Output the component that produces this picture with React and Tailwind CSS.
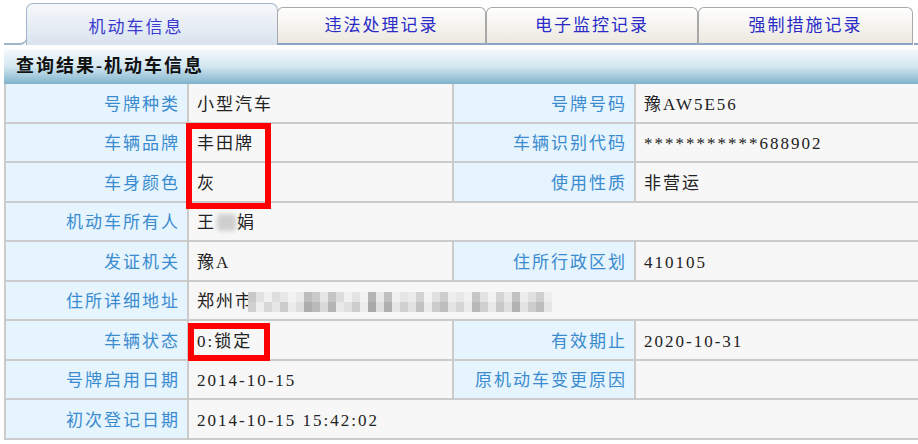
import React from "react"

const font = { fontFamily: '"Liberation Serif", "Noto Sans CJK SC", serif' }

const rows = [
  { l1: "号牌种类", v1: "小型汽车", l2: "号牌号码", v2: "豫AW5E56" },
  { l1: "车辆品牌", v1: "丰田牌", l2: "车辆识别代码", v2: "***********688902" },
  { l1: "车身颜色", v1: "灰", l2: "使用性质", v2: "非营运" },
  { l1: "机动车所有人", span: "owner" },
  { l1: "发证机关", v1: "豫A", l2: "住所行政区划", v2: "410105" },
  { l1: "住所详细地址", span: "address" },
  { l1: "车辆状态", v1: "0:锁定", l2: "有效期止", v2: "2020-10-31" },
  { l1: "号牌启用日期", v1: "2014-10-15", l2: "原机动车变更原因", v2: "" },
  { l1: "初次登记日期", span: "2014-10-15 15:42:02" },
]

// pixel mosaic over the address
const mosaicTop = [
  "bg-[#c8c8c8]", "bg-[#e2e2e2]", "bg-[#f0f0f0]", "bg-[#dedede]", "bg-[#e8e8e8]",
  "bg-[#f2f2f2]", "bg-[#eaeaea]", "bg-[#bdbdbd]", "bg-[#cbcbcb]", "bg-[#e6e6e6]",
  "bg-[#c4c4c4]", "bg-[#dcdcdc]", "bg-[#f1f1f1]", "bg-[#e4e4e4]", "bg-[#f3f3f3]",
  "bg-[#b5b5b5]", "bg-[#e9e9e9]", "bg-[#bfbfbf]", "bg-[#f0f0f0]", "bg-[#e5e5e5]",
  "bg-[#ebebeb]", "bg-[#d2d2d2]", "bg-[#f2f2f2]", "bg-[#e1e1e1]", "bg-[#cdcdcd]",
  "bg-[#eeeeee]", "bg-[#e7e7e7]", "bg-[#f1f1f1]", "bg-[#c6c6c6]", "bg-[#e3e3e3]",
  "bg-[#f2f2f2]", "bg-[#d4d4d4]", "bg-[#e9e9e9]", "bg-[#c2c2c2]", "bg-[#ededed]",
  "bg-[#e0e0e0]", "bg-[#cfcfcf]", "bg-[#eeeeee]",
]
const mosaicBottom = [
  "bg-[#d0d0d0]", "bg-[#eeeeee]", "bg-[#d7d7d7]", "bg-[#e6e6e6]", "bg-[#cccccc]",
  "bg-[#ececec]", "bg-[#dddddd]", "bg-[#aeaeae]", "bg-[#bababa]", "bg-[#d9d9d9]",
  "bg-[#b4b4b4]", "bg-[#e8e8e8]", "bg-[#e0e0e0]", "bg-[#cdcdcd]", "bg-[#ededed]",
  "bg-[#a9a9a9]", "bg-[#dfdfdf]", "bg-[#afafaf]", "bg-[#e6e6e6]", "bg-[#d0d0d0]",
  "bg-[#e2e2e2]", "bg-[#c2c2c2]", "bg-[#ebebeb]", "bg-[#cbcbcb]", "bg-[#bebebe]",
  "bg-[#e4e4e4]", "bg-[#d5d5d5]", "bg-[#ececec]", "bg-[#b8b8b8]", "bg-[#d0d0d0]",
  "bg-[#e9e9e9]", "bg-[#c7c7c7]", "bg-[#dfdfdf]", "bg-[#b2b2b2]", "bg-[#e3e3e3]",
  "bg-[#cdcdcd]", "bg-[#bdbdbd]", "bg-[#e6e6e6]",
]

function Owner() {
  return (
    <span className="inline-flex items-center">
      王
      <span className="inline-block w-[19px] h-[17px] mx-[1px] rounded-sm bg-[#cfcfcf] blur-[2px]"></span>
      娟
    </span>
  )
}

function Address() {
  return (
    <span className="inline-flex items-center">
      郑州市
      <span className="flex flex-col ml-[-6px]">
        <span className="flex">
          {mosaicTop.map((c, i) => (
            <span key={i} className={"block w-[8px] h-[10px] " + c}></span>
          ))}
        </span>
        <span className="flex">
          {mosaicBottom.map((c, i) => (
            <span key={i} className={"block w-[8px] h-[10px] " + c}></span>
          ))}
        </span>
      </span>
    </span>
  )
}

function Tab({ label }) {
  return (
    <div className="h-[38px] flex items-center justify-center rounded-t-[6px] border border-b-2 border-[#a9a9a9] border-b-[#8aa5c6] bg-linear-to-b from-[#ffffff] to-[#ebe8de] text-[#2b2bc8] -ml-px w-full">
      {label}
    </div>
  )
}

export default function App() {
  return (
    <div
      className="relative w-[918px] h-[444px] bg-white overflow-hidden text-[17px] tracking-[2px]"
      style={font}
    >
      {/* tabs */}
      <div className="flex items-end h-[45px] pt-[3px] pl-[4px]">
        <div className="w-[23px] h-[9px] border-b-2 border-r border-[#a3b6cb] rounded-br-[7px]"></div>
        <div className="w-[252px] h-[42px] -ml-px flex justify-center pt-[11px] pr-[32px] rounded-t-[7px] border border-b-0 border-[#a3b6cb] bg-linear-to-b from-[#f6f8fb] to-[#d9e3ee] text-[#3a3ad0]">
          机动车信息
        </div>
        <div className="flex items-end">
          <div className="w-[209px]"><Tab label="违法处理记录" /></div>
          <div className="w-[212px]"><Tab label="电子监控记录" /></div>
          <div className="w-[215px]"><Tab label="强制措施记录" /></div>
        </div>
        <div className="flex-1 h-[2px] bg-[#8aa5c6]"></div>
      </div>

      {/* header */}
      <div className="ml-[4px] mt-[4px] h-[35px] flex items-center pl-[12px] bg-linear-to-b from-[#f4f9fc] via-[#d3e7f1] to-[#7fb3cc] font-bold text-[18px] text-[#111]">
        查询结果-机动车信息
      </div>

      {/* table */}
      <div className="ml-[4px] border-l-2 border-[#cbcbcb]">
        {rows.map((r, i) => (
          <div key={i} className="flex h-[39.5px] border-b-2 border-[#cbcbcb]">
            <div className="w-[183px] shrink-0 flex items-center justify-end pt-[3px] pr-[7px] bg-[#e5f4fd] text-[#3a8bd0] border-r-2 border-[#cbcbcb]">
              {r.l1}
            </div>
            {r.span ? (
              <div className="flex-1 flex items-center pt-[3px] pl-[8px] bg-[#f7f7f7] text-[#222]">
                {r.span === "owner" ? <Owner /> : r.span === "address" ? <Address /> : r.span}
              </div>
            ) : (
              <>
                <div className="w-[265px] shrink-0 flex items-center pt-[3px] pl-[8px] bg-[#f7f7f7] text-[#222] border-r-2 border-[#cbcbcb]">
                  {r.v1}
                </div>
                <div className="w-[182px] shrink-0 flex items-center justify-end pt-[3px] pr-[7px] bg-[#e5f4fd] text-[#3a8bd0] border-r-2 border-[#cbcbcb]">
                  {r.l2}
                </div>
                <div className="flex-1 flex items-center pt-[3px] pl-[8px] bg-[#f7f7f7] text-[#222]">
                  {r.v2}
                </div>
              </>
            )}
          </div>
        ))}
      </div>

      {/* red annotation boxes */}
      <div className="absolute left-[186px] top-[123px] w-[85px] h-[86px] border-[6px] border-[#ff0000]"></div>
      <div className="absolute left-[188px] top-[323px] w-[82px] h-[38px] border-[6px] border-[#ff0000]"></div>
    </div>
  )
}
